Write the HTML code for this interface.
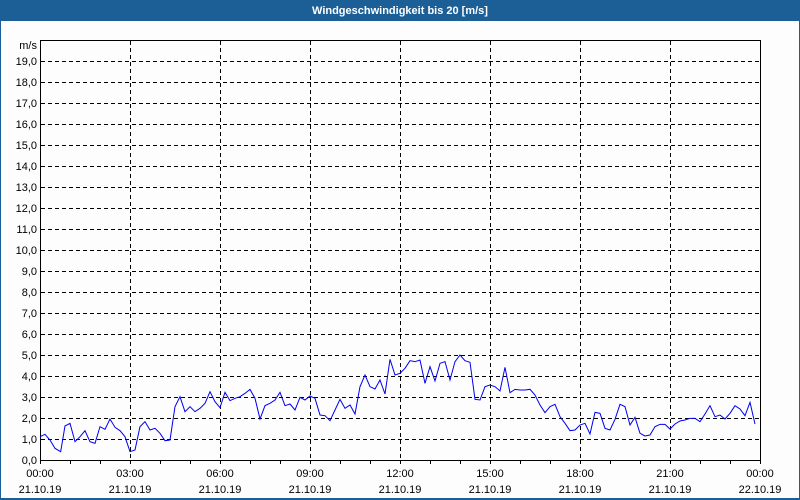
<!DOCTYPE html>
<html><head><meta charset="utf-8"><style>
body{margin:0;width:800px;height:500px;overflow:hidden;background:#fff;font-family:"Liberation Sans",Tahoma,sans-serif}
</style></head><body>
<svg width="800" height="500" xmlns="http://www.w3.org/2000/svg" style="display:block">
<rect x="0" y="0" width="800" height="500" fill="#fdfdfd"/>
<rect x="0" y="0" width="800" height="21" fill="#1c5f97"/>
<rect x="0" y="0" width="1" height="500" fill="#1c5f97"/>
<rect x="799" y="0" width="1" height="500" fill="#1c5f97"/>
<rect x="0" y="498" width="800" height="2" fill="#1c5f97"/>
<text x="400" y="14" fill="#fff" font-size="11" font-weight="bold" text-anchor="middle">Windgeschwindigkeit bis 20 [m/s]</text>
<g stroke="#000" stroke-width="1" stroke-dasharray="4,3" shape-rendering="crispEdges" id="g">
</g>
<g font-size="11" fill="#000" text-anchor="end" id="yl"></g>
<g font-size="11" fill="#000" text-anchor="middle" id="xl"></g>
<rect x="40.5" y="40.5" width="720" height="420" fill="none" stroke="#000" stroke-width="1" shape-rendering="crispEdges"/>
<g transform="translate(40,340) scale(0.3333333)">
<polyline fill="none" stroke="#0000ee" stroke-width="1" vector-effect="non-scaling-stroke" points="0,290 15,283 30,300 45,325 62,335 75,258 90,250 105,305 120,290 135,272 150,305 165,310 180,260 195,268 210,237 225,262 240,272 255,290 270,335 285,330 300,260 315,245 330,270 345,265 360,280 375,302 390,300 405,200 420,170 435,215 450,200 465,215 480,205 495,190 510,155 525,185 540,203 555,157 570,182 585,175 600,170 615,160 630,148 645,175 660,237 675,197 690,190 705,180 720,157 735,197 750,192 765,210 780,172 795,180 810,168 825,175 840,225 855,227 870,242 885,210 900,178 915,205 930,195 945,222 960,140 975,105 990,140 1005,147 1020,120 1035,162 1050,58 1065,105 1080,100 1095,85 1110,62 1125,65 1140,60 1155,130 1170,80 1185,123 1200,70 1215,65 1230,120 1245,65 1260,45 1275,62 1290,67 1305,178 1320,180 1335,140 1350,135 1365,140 1380,153 1395,82 1410,158 1425,148 1440,150 1455,150 1470,148 1485,165 1500,195 1515,218 1530,200 1545,193 1560,230 1575,250 1590,272 1605,270 1620,255 1635,250 1650,282 1665,217 1680,220 1695,265 1710,270 1725,238 1740,193 1755,200 1770,255 1785,232 1800,280 1815,288 1830,285 1845,260 1860,253 1875,253 1890,267 1905,252 1920,243 1935,240 1950,235 1965,235 1980,245 1995,222 2010,197 2025,230 2040,225 2055,237 2070,220 2085,197 2100,207 2115,227 2130,187 2145,252"/>
</g>
</svg>
<script>
var ns="http://www.w3.org/2000/svg",g=document.getElementById('g'),yl=document.getElementById('yl'),xl=document.getElementById('xl');
function el(p,t,a){var e=document.createElementNS(ns,t);for(var k in a)e.setAttribute(k,a[k]);p.appendChild(e);return e;}
for(var i=1;i<20;i++){var y=460-21*i+0.5;el(g,'line',{x1:41,x2:760,y1:y,y2:y});}
for(var j=1;j<8;j++){var x=40+90*j+0.5;el(g,'line',{x1:x,x2:x,y1:41,y2:460});}
for(var k=0;k<=24;k++){var x2=40+30*k+0.5;var t=el(document.querySelector('svg'),'line',{x1:x2,x2:x2,y1:460,y2:464,stroke:'#000','shape-rendering':'crispEdges'});}
for(var i=0;i<20;i++){var t=el(yl,'text',{x:37,y:460-21*i+4});t.textContent=i+',0';}
var m=el(yl,'text',{x:37,y:49});m.textContent='m/s';
var hs=['00:00','03:00','06:00','09:00','12:00','15:00','18:00','21:00','00:00'];
for(var j=0;j<9;j++){var x=40+90*j;var a=el(xl,'text',{x:x,y:477});a.textContent=hs[j];var b=el(xl,'text',{x:x,y:493});b.textContent=j==8?'22.10.19':'21.10.19';}
</script>
</body></html>
